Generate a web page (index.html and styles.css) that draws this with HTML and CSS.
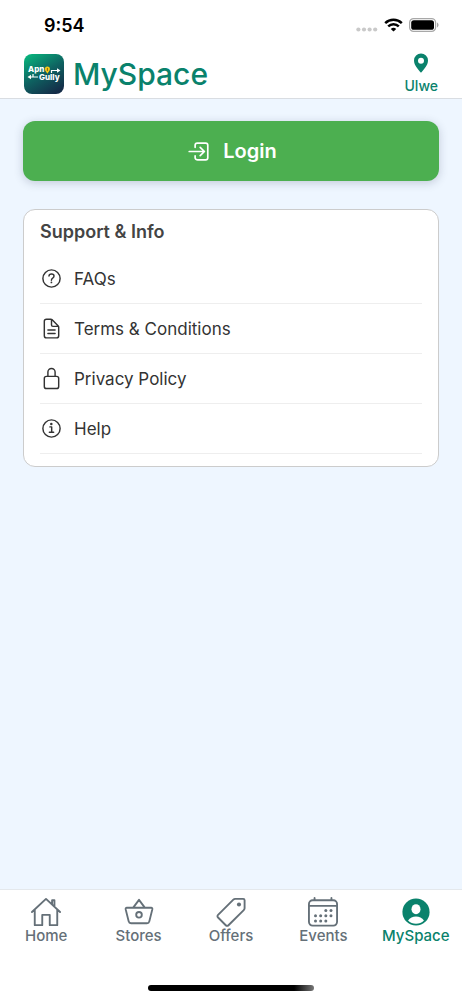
FILE: index.html
```html
<!DOCTYPE html>
<html lang="en">
<head>
<meta charset="utf-8">
<meta name="viewport" content="width=device-width, initial-scale=1">
<title>MySpace</title>
<link rel="stylesheet" href="styles.css">
</head>
<body>
<div class="status-bar">
  <time class="clock">9:54</time>
  <div class="indicators">
    <svg width="22" height="5" viewBox="0 0 22 5" fill="#c9c9c9" aria-hidden="true"><circle cx="2.4" cy="2.5" r="2.1"/><circle cx="8" cy="2.5" r="2.1"/><circle cx="13.6" cy="2.5" r="2.1"/><circle cx="19.2" cy="2.5" r="2.1"/></svg>
    <svg class="wifi" width="19" height="14" viewBox="0 0 19 14" aria-hidden="true"><path d="M1.2 5.2a12 12 0 0 1 16.6 0M4.2 8.4a7.6 7.6 0 0 1 10.6 0" fill="none" stroke="#000" stroke-width="2.5"/><path d="M9.5 13.6 6.8 10.9a4 4 0 0 1 5.4 0z"/></svg>
    <svg width="30" height="14" viewBox="0 0 30 14" aria-hidden="true"><rect x=".6" y=".6" width="26" height="12.8" rx="4" fill="none" stroke="#a8a8a8" stroke-width="1.2"/><rect x="2.2" y="2.2" width="22.8" height="9.6" rx="2.6"/><path d="M28 4.6c2 .8 2 4 0 4.8z" fill="#a8a8a8"/></svg>
  </div>
</div>
<header class="header">
  <div class="brand">
    <svg class="logo" viewBox="0 0 40 40" role="img" aria-label="Apni Gully">
      <defs><linearGradient id="lg" x1=".15" y1="0" x2=".75" y2="1"><stop offset="0" stop-color="#08b27c"/><stop offset=".5" stop-color="#0e6361"/><stop offset="1" stop-color="#142c48"/></linearGradient></defs>
      <rect width="40" height="40" rx="8" fill="url(#lg)"/>
      <text class="logo-text" x="4" y="18">Apn</text>
      <text class="logo-text" x="15" y="26">Gully</text>
      <path d="M23.400 12.500a2.500 2.500 0 0 1 2.500 2.600c0 1.700-1.100 2.600-2.500 4.600-1.400-2-2.500-2.900-2.500-4.600a2.500 2.500 0 0 1 2.500-2.600z" fill="#f6c915"/>
      <path d="M23.400 14v3" stroke="#8b6b12"/>
      <path d="M27.500 19v-2.500H34M9 20v3H6m3 0h5" fill="none" stroke="#fff" stroke-width="1.200"/>
      <path d="M33 14.300 36.500 16.500 33 18.700zM7 20.800 3.500 23 7 25.200z" fill="#fff"/>
    </svg>
    <h1 class="title">MySpace</h1>
  </div>
  <button class="location" type="button">
    <svg width="16" height="20" viewBox="0 0 16 20" aria-hidden="true"><path fill="currentColor" fill-rule="evenodd" d="M8 .5a7 7 0 0 0-7 7c0 4.700 4 8.800 7 12.200 3-3.400 7-7.500 7-12.200a7 7 0 0 0-7-7zm0 4.200a3 3 0 1 1 0 6 3 3 0 0 1 0-6z"/></svg>
    <span>Ulwe</span>
  </button>
</header>
<main class="main">
  <button class="login" type="button">
    <svg class="icon" width="27" height="27" viewBox="0 0 512 512" aria-hidden="true"><path d="M192 176v-40a40 40 0 0 1 40-40h160a40 40 0 0 1 40 40v240a40 40 0 0 1-40 40H240c-22 0-48-18-48-40v-40M288 336l80-80-80-80M80 256h272"/></svg>
    <span>Login</span>
  </button>
  <section class="card">
    <h2 class="card-title">Support &amp; Info</h2>
    <ul class="links">
      <li><a class="link" href="#faqs"><svg class="icon" viewBox="0 0 512 512" aria-hidden="true"><circle cx="256" cy="256" r="192"/><path d="M200 202c1-20 16-48 57-48 33 0 55 19 55 45 0 25-12 37-30 49-21 13-28 27-28 48"/><circle class="dot" cx="254" cy="344" r="20"/></svg>FAQs</a></li>
      <li><a class="link" href="#terms"><svg class="icon" viewBox="0 0 512 512" aria-hidden="true"><path d="M416 221.250V416a48 48 0 0 1-48 48H144a48 48 0 0 1-48-48V96a48 48 0 0 1 48-48h98.750a32 32 0 0 1 22.620 9.370l141.260 141.260a32 32 0 0 1 9.370 22.620zM256 56v120a32 32 0 0 0 32 32h120M176 288h160M176 368h160"/></svg>Terms &amp; Conditions</a></li>
      <li><a class="link" href="#privacy"><svg class="icon" viewBox="0 0 512 512" aria-hidden="true"><path d="M336 208v-95a80 80 0 0 0-160 0v95"/><rect x="96" y="208" width="320" height="272" rx="48"/></svg>Privacy Policy</a></li>
      <li><a class="link" href="#help"><svg class="icon" viewBox="0 0 512 512" aria-hidden="true"><circle cx="256" cy="256" r="192"/><path d="M220 220h40v116M208 340h96"/><circle class="dot" cx="252" cy="156" r="28"/></svg>Help</a></li>
    </ul>
  </section>
</main>
<nav class="tabs" aria-label="Main">
  <div class="tab-row">
    <a class="tab" href="#home"><svg class="tab-icon" viewBox="0 0 32 32" aria-hidden="true"><path d="M1 16 16 2l15 14M4 13.500V30h8V19h8v11h8V13.500M22.500 7.500V3.500H25v7"/></svg>Home</a>
    <a class="tab" href="#stores"><svg class="tab-icon" viewBox="0 0 32 32" aria-hidden="true"><path d="M3 11.500h26c1 0 1.400.8 1.200 1.700L27 26c-.3 1.300-1.300 2-2.500 2h-17C6.300 28 5.300 27.300 5 26L1.800 13.200C1.600 12.300 2 11.500 3 11.500zM10 11l6-8 6 8"/><circle cx="16" cy="19" r="3"/></svg>Stores</a>
    <a class="tab" href="#offers"><svg class="tab-icon" viewBox="0 0 32 32" aria-hidden="true"><path d="M29 2h-8.500c-.8 0-1.400.2-2 .8L2.200 19c-.9.9-.9 2 0 2.900l8.200 8.200c.9.9 2 .9 2.900 0L29.600 14c.6-.6.9-1.200.9-2V3.500C30.500 2.500 30 2 29 2z"/><circle class="tab-dot" cx="24.500" cy="8" r="2.200"/></svg>Offers</a>
    <a class="tab" href="#events"><svg class="tab-icon" viewBox="0 0 32 32" aria-hidden="true"><rect x="1" y="3.500" width="30" height="27" rx="4"/><path d="M1 9.500h30M7 1v2M25 1v2"/><g class="tab-dot"><circle cx="19" cy="14.500" r="1.600"/><circle cx="24.500" cy="14.500" r="1.600"/><circle cx="8" cy="20" r="1.600"/><circle cx="13.500" cy="20" r="1.600"/><circle cx="19" cy="20" r="1.600"/><circle cx="24.500" cy="20" r="1.600"/><circle cx="8" cy="25.500" r="1.600"/><circle cx="13.500" cy="25.500" r="1.600"/><circle cx="19" cy="25.500" r="1.600"/></g></svg>Events</a>
    <a class="tab tab-active" href="#myspace" aria-current="page"><svg class="tab-icon" viewBox="0 0 32 32" aria-hidden="true"><circle cx="16" cy="16" r="14.500" fill="#0a826c" stroke="none"/><ellipse cx="16" cy="13" rx="4.800" ry="5.400" fill="#fff" stroke="none"/><path d="M7.500 25c2-3 5-4.200 8.500-4.200s6.500 1.200 8.500 4.200a12.200 12.200 0 0 1-17 0z" fill="#fff" stroke="none"/></svg>MySpace</a>
  </div>
  <div class="home-indicator"></div>
</nav>
</body>
</html>
```
FILE: styles.css
```css
* {
  box-sizing: border-box;
}

body {
  margin: 0;
  min-height: 100vh;
  display: flex;
  flex-direction: column;
  background: #eef6ff;
  color: #333;
  font-family: Inter, "Liberation Sans", sans-serif;
}

button {
  border: 0;
  font-family: inherit;
  cursor: pointer;
}

a {
  color: inherit;
  text-decoration: none;
}

svg {
  flex: none;
  display: block;
}

.status-bar {
  display: flex;
  justify-content: space-between;
  align-items: center;
  height: 50px;
  padding: 0 23px 0 44px;
  background: #fff;
  color: #000;
}

.clock {
  font-size: 18px;
  font-weight: 600;
}

.indicators {
  display: flex;
  align-items: flex-end;
  gap: 6px;
}

.header {
  display: flex;
  justify-content: space-between;
  align-items: center;
  height: 49px;
  padding: 0 24px;
  background: #fff;
  border-bottom: 1px solid #d9dde2;
}

.brand {
  display: flex;
  align-items: center;
  gap: 9px;
}

.logo {
  width: 40px;
  height: 40px;
}

.logo-text {
  font-family: Inter, sans-serif;
  font-size: 8px;
  font-weight: 800;
  fill: #fff;
}

.title {
  margin: 0;
  color: #0a826c;
  font-size: 30px;
  font-weight: 500;
  line-height: 40px;
}

.location {
  display: flex;
  flex-direction: column;
  align-items: center;
  gap: 4px;
  padding: 0;
  background: none;
  color: #0a826c;
  font-size: 14px;
  font-weight: 500;
  line-height: 18px;
}

.main {
  flex: 1;
  padding: 22px 23px;
}

.login {
  display: flex;
  justify-content: center;
  align-items: center;
  gap: 11px;
  width: 100%;
  height: 60px;
  padding: 0;
  border-radius: 12px;
  background: #4caf50;
  box-shadow: 0 2px 10px rgba(40, 50, 80, 0.22);
  color: #fff;
  font-size: 20px;
  font-weight: 600;
}

.icon {
  width: 23px;
  height: 23px;
  fill: none;
  stroke: currentColor;
  stroke-width: 32;
  stroke-linecap: round;
  stroke-linejoin: round;
}

.login .icon {
  width: 27px;
  height: 27px;
}

.dot {
  fill: currentColor;
  stroke: none;
}

.card {
  margin-top: 28px;
  padding: 10px 16px 12px;
  border: 1px solid #ccc;
  border-radius: 12px;
  background: #fff;
}

.card-title {
  margin: 0 0 10px;
  color: #444;
  font-size: 18px;
  font-weight: 600;
  line-height: 24px;
}

.links {
  margin: 0;
  padding: 0;
  list-style: none;
}

.link {
  display: flex;
  align-items: center;
  gap: 11px;
  height: 50px;
  border-bottom: 1px solid #eee;
  font-size: 17px;
}

.tabs {
  display: flex;
  flex-direction: column;
  justify-content: space-between;
  align-items: center;
  height: 111px;
  padding: 7px 0 9px;
  border-top: 1px solid #e4e8ec;
  background: #fff;
}

.tab-row {
  display: flex;
  width: 100%;
}

.tab {
  flex: 1 1 0;
  display: flex;
  flex-direction: column;
  align-items: center;
  color: #657078;
  font-size: 15px;
  font-weight: 500;
  line-height: 18px;
}

.tab-active {
  color: #0a826c;
}

.tab-icon {
  width: 32px;
  height: 30px;
  fill: none;
  stroke: currentColor;
  stroke-width: 2;
  stroke-linejoin: round;
  stroke-linecap: round;
}

.tab-dot {
  fill: currentColor;
  stroke: none;
}

.home-indicator {
  width: 36%;
  height: 6px;
  border-radius: 3px;
  background: linear-gradient(90deg, #000 88%, #777);
}
```
